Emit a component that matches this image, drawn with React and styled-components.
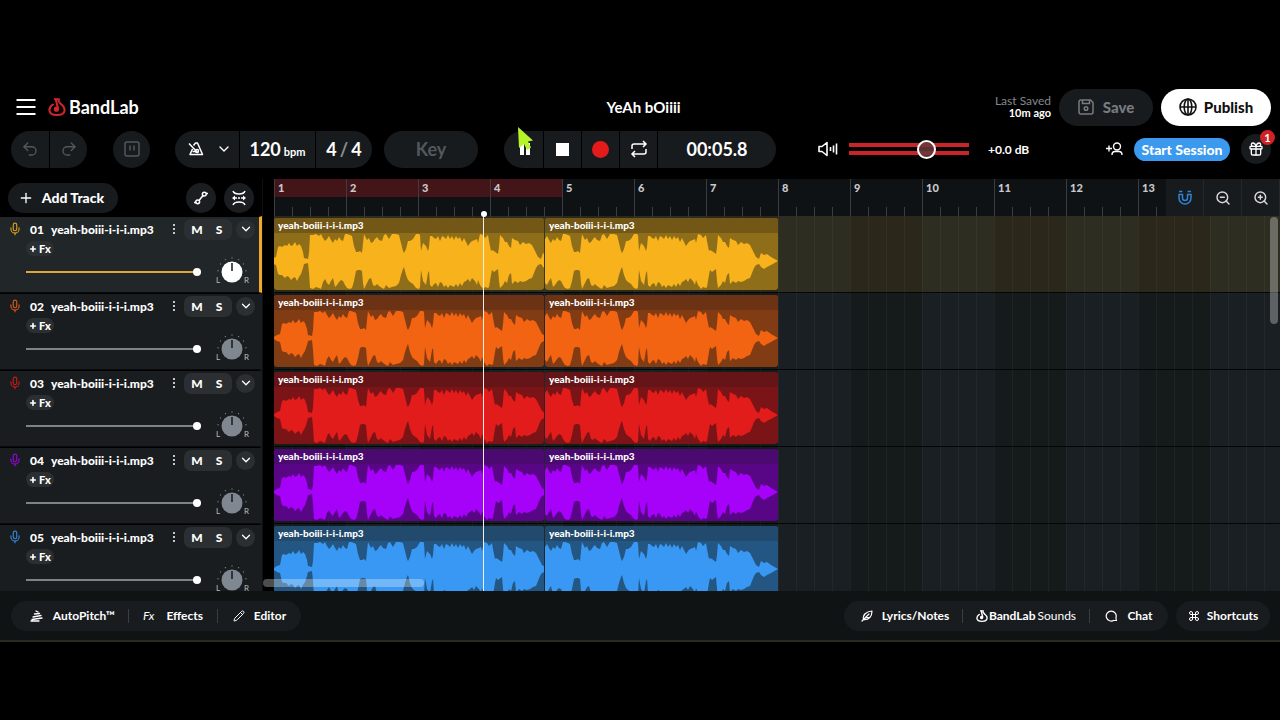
import React from "react";
import styled, { createGlobalStyle } from "styled-components";
import { ChevronDown, Command, Gift, Mic, Pencil, Plus, Redo2, Undo2, ZoomIn, ZoomOut } from "lucide-react";

const GlobalStyle = createGlobalStyle`
  * {
    box-sizing: border-box;
  }

  body {
    margin: 0;
    background: #000;
    color: #fff;
    font-family: Lato, "Open Sans", sans-serif;
  }

  button {
    display: flex;
    align-items: center;
    justify-content: center;
    padding: 0;
    border: 0;
    background: none;
    color: inherit;
    font: inherit;
    cursor: pointer;
  }

  svg {
    flex: none;
  }
`;

const Page = styled.div`
  display: flex;
  flex-direction: column;
  height: 100vh;
  padding: 85px 0 78px;
  overflow: hidden;
`;

/* top bar */

const Header = styled.header`
  display: grid;
  grid-template-columns: 1fr auto 1fr;
  align-items: center;
  height: 44px;
  padding: 0 9px 0 16px;
`;

const HeaderSide = styled.div`
  display: flex;
  align-items: center;
  justify-content: ${(props) => (props.$end ? "flex-end" : "flex-start")};
  gap: ${(props) => (props.$end ? "8px" : "12px")};
`;

const Logo = styled.a`
  display: flex;
  align-items: center;
  gap: 3px;
  color: #fff;
  font-size: 18px;
  font-weight: 700;
  line-height: 22px;
  text-decoration: none;
`;

const Title = styled.h1`
  margin: 0;
  font-size: 15px;
  font-weight: 700;
  line-height: 20px;
`;

const Saved = styled.div`
  display: flex;
  flex-direction: column;
  color: #84888c;
  font-size: 12px;
  line-height: 12px;
  text-align: right;

  strong {
    color: #fff;
    font-size: 11px;
  }
`;

const HeaderButton = styled.button`
  gap: ${(props) => (props.$primary ? "7px" : "9px")};
  width: ${(props) => (props.$primary ? "110px" : "94px")};
  height: 37px;
  border-radius: 19px;
  background: ${(props) => (props.$primary ? "#fff" : "#171b1e")};
  color: ${(props) => (props.$primary ? "#111" : "#777b80")};
  font-size: 15px;
  font-weight: 900;
`;

/* toolbar */

const Toolbar = styled.div`
  display: flex;
  align-items: center;
  height: 40px;
  padding: 0 9px 0 11px;
`;

const Group = styled.div`
  display: flex;
  gap: 1px;
  height: 37px;
  margin-right: ${(props) => props.$space || "12px"};
`;

const Tool = styled.button`
  position: relative;
  gap: ${(props) => props.$gap || "3px"};
  width: ${(props) => props.$width || "37px"};
  height: 37px;
  padding-left: ${(props) => props.$pad || "0"};
  background: #171b1e;
  color: ${(props) => (props.$dim ? "#53585c" : "#fff")};
  font-size: 18px;
  font-weight: 700;

  &:first-child {
    border-radius: 19px 0 0 19px;
  }

  &:last-child {
    border-radius: 0 19px 19px 0;
  }

  &:only-child {
    border-radius: 19px;
  }

  small {
    padding-top: 4px;
    font-size: 11px;
  }

  i {
    color: #8b8f92;
    font-style: normal;
  }
`;

const Pointer = styled.svg`
  position: absolute;
  top: -4px;
  left: 14px;
`;

const Volume = styled.label`
  display: flex;
  align-items: center;
  gap: 11px;
`;

const MasterSlider = styled.input`
  width: 120px;
  height: 20px;
  margin: 0;
  appearance: none;
  background: linear-gradient(#c9242a 0 4px, transparent 4px 8px, #c9242a 8px) center / 100% 12px no-repeat;

  &::-webkit-slider-thumb {
    width: 19px;
    height: 19px;
    appearance: none;
    border: 2px solid #fff;
    border-radius: 50%;
    background: #6a393bdd;
  }
`;

const Decibels = styled.output`
  margin-left: 19px;
  font-size: 12px;
  font-weight: 700;
`;

const SessionArea = styled.div`
  display: flex;
  align-items: center;
  gap: 11px;
  margin-left: auto;
`;

const SessionButton = styled.button`
  width: 96px;
  height: 23px;
  border-radius: 12px;
  background: #3b99ee;
  font-size: 14px;
  font-weight: 900;
`;

const GiftButton = styled.button`
  position: relative;
  width: 30px;
  height: 30px;
  border-radius: 50%;
  background: #171b1e;
`;

const Badge = styled.span`
  position: absolute;
  top: -4px;
  right: -4px;
  width: 15px;
  height: 15px;
  border-radius: 50%;
  background: #cf2228;
  font-size: 11px;
  font-weight: 700;
  line-height: 15px;
`;

/* workspace */

const Workspace = styled.main`
  display: grid;
  flex: 1;
  grid-template-rows: minmax(0, 1fr);
  grid-template-columns: 262px minmax(0, 1fr);
  min-height: 0;
  margin-top: 10px;
  overflow: hidden;
`;

const SidebarHead = styled.div`
  display: flex;
  align-items: center;
  gap: 8px;
  height: 37px;
  padding: 0 8px;
`;

const AddTrack = styled.button`
  gap: 8px;
  width: 110px;
  height: 30px;
  margin-right: auto;
  padding-right: 4px;
  border-radius: 15px;
  background: #171b1e;
  font-size: 14px;
  font-weight: 900;
`;

const RoundButton = styled.button`
  width: ${(props) => props.$size};
  height: ${(props) => props.$size};
  border-radius: 50%;
  background: ${(props) => props.$fill || "#1a1e21"};
`;

const TrackPanel = styled.section`
  display: flex;
  flex-direction: column;
  height: 77px;
  padding: 1px 4px 0 8px;
  border-top: 1px solid #000;
  border-bottom: 1px solid #090a0b;
  border-right: 3px solid ${(props) => (props.$selected ? "#f0a92b" : "#1a1d20")};
  background: ${(props) => (props.$selected ? "#212628" : "#1a1d20")};
`;

const TrackTop = styled.div`
  display: flex;
  align-items: center;
  height: 22px;
`;

const TrackNumber = styled.span`
  width: 21px;
  margin-left: 8px;
  font-size: 12px;
  font-weight: 900;
`;

const TrackName = styled.span`
  flex: 1;
  font-size: 12px;
  font-weight: 900;
  white-space: nowrap;
`;

const Dots = styled.button`
  width: 12px;
  height: 20px;
  margin-right: 4px;
`;

const MuteSolo = styled.div`
  display: flex;
  margin-right: 4px;
  padding: 0 2px;
  border-radius: 7px;
  background: #2b2f32;
`;

const Letter = styled.button`
  width: 22px;
  height: 21px;
  font-size: 12px;
  font-weight: 900;
`;

const FxButton = styled.button`
  gap: 2px;
  width: 28px;
  height: 15px;
  margin: 1px 0 0 18px;
  border-radius: 8px;
  background: #2b2f32;
  font-size: 11px;
  font-weight: 900;
`;

const TrackBottom = styled.div`
  display: flex;
  align-items: center;
  justify-content: space-between;
  height: 32px;
  padding: 0 5px 0 18px;
`;

const TrackSlider = styled.input`
  width: 175px;
  height: 10px;
  margin: 0;
  appearance: none;
  background: linear-gradient(${(props) => props.$color}, ${(props) => props.$color}) center / 100% 2px no-repeat;

  &::-webkit-slider-thumb {
    width: 8px;
    height: 8px;
    appearance: none;
    border-radius: 50%;
    background: #fff;
  }
`;

const Timeline = styled.div`
  position: relative;
  min-width: 0;
  padding-left: 11px;
  border-left: 1px solid #0e1011;
`;

const Ruler = styled.div`
  display: flex;
  height: 37px;
  background: #0f1214;
`;

const Bars = styled.div`
  display: flex;
  flex: 1;
  overflow: hidden;
`;

const Bar = styled.div`
  flex: none;
  width: 72px;
  padding: 2px 4px;
  background:
    linear-gradient(#3a3e40, #3a3e40) 0 0 / 1px 100% no-repeat,
    repeating-linear-gradient(90deg, #3a3e40 0 1px, transparent 1px 18px) 0 100% / 100% 9px no-repeat,
    linear-gradient(${(props) => (props.$loop ? "#431519" : "transparent")} 0 18px, transparent 18px);
  color: #c9c9cd;
  font-size: 11px;
  font-weight: 900;
  line-height: 14px;
`;

const RulerTool = styled.button`
  width: 38px;
  height: 37px;
  border-right: 1px solid #24282b;
  background: #171b1e;
  color: ${(props) => (props.$active ? "#2f83d0" : "#d8d8d8")};
`;

const Lane = styled.div`
  display: flex;
  gap: 1px;
  height: 77px;
  padding: 2px 0;
  border-bottom: 1px solid #050606;
  background:
    repeating-linear-gradient(90deg, #ffffff0a 0 1px, transparent 1px 18px),
    ${(props) =>
      props.$selected
        ? "repeating-linear-gradient(90deg, #2b271b 0 72px, #2e2d21 72px 144px)"
        : "repeating-linear-gradient(90deg, #151a1b 0 72px, #191f22 72px 144px)"};
`;

const Clip = styled.div`
  flex: none;
  width: ${(props) => props.$width}px;
  overflow: hidden;
  border-radius: 3px;
  background: ${(props) => props.$body};

  svg {
    display: block;
  }
`;

const ClipName = styled.div`
  height: 15px;
  padding-left: 4px;
  background: ${(props) => props.$head};
  font-size: 10px;
  font-weight: 900;
  line-height: 14px;
`;

const Playhead = styled.div`
  position: absolute;
  top: 34px;
  bottom: 0;
  left: 220px;
  width: 1px;
  background: #f3eee6;

  &::before {
    content: "";
    position: absolute;
    top: -2px;
    left: -2px;
    width: 6px;
    height: 6px;
    border-radius: 50%;
    background: #fff;
  }
`;

const ScrollX = styled.div`
  position: absolute;
  bottom: 4px;
  left: 0;
  width: 161px;
  height: 8px;
  border-radius: 4px;
  background: #ffffff4d;
`;

const ScrollY = styled.div`
  position: absolute;
  top: 38px;
  right: 2px;
  width: 8px;
  height: 107px;
  border-radius: 4px;
  background: #ffffff4d;
`;

/* bottom bar */

const Footer = styled.footer`
  display: flex;
  align-items: center;
  gap: 8px;
  height: 51px;
  padding: 0 10px 0 11px;
  border-bottom: 2px solid #2b291f;
  background: #0f1314;
`;

const Pill = styled.div`
  display: flex;
  align-items: center;
  height: 30px;
  margin-right: ${(props) => (props.$push ? "auto" : "0")};
  border-radius: 15px;
  background: #181c1f;
`;

const FooterButton = styled.button`
  gap: ${(props) => props.$gap || "12px"};
  width: ${(props) => props.$width};
  height: 14px;
  padding-left: ${(props) => props.$pad || "0"};
  border-left: 1px solid #3a3f42;
  font-size: 12px;
  font-weight: 700;

  &:first-child {
    border-left: 0;
  }

  em {
    font-weight: 400;
  }
`;

const SoundsName = styled.span`
  span {
    margin-left: 2px;
    font-weight: 400;
  }
`;

const tracks = [
  { color: "#f7b21c", body: "#8f6e19", head: "#735717", selected: true, shift: 4 },
  { color: "#f26312", body: "#823c14", head: "#6b3214", shift: 0 },
  { color: "#e21b1b", body: "#7b1417", head: "#651518", shift: 0 },
  { color: "#a602fa", body: "#590686", head: "#4b0a70", shift: 0 },
  { color: "#3998f3", body: "#235682", head: "#224a6d", shift: 0 },
];

// [x, height above the centre line, height below it]
const samples = [
  [0, 1, 1], [3, 3, 3], [6, 4, 4], [8, 14, 13], [10, 15, 14], [12, 14, 14], [15, 16, 17], [17, 15, 15],
  [19, 18, 16], [21, 15, 19], [23, 16, 17], [25, 19, 16], [27, 15, 20], [29, 17, 16], [31, 15, 13], [33, 9, 7],
  [34, 3, 3], [38, 2, 2], [39, 8, 12], [40, 26, 27], [43, 26, 28], [46, 27, 26], [49, 25, 27], [51, 27, 28],
  [53, 23, 21], [55, 20, 18], [57, 22, 22], [59, 25, 24], [61, 21, 20], [63, 18, 17], [65, 22, 26], [67, 20, 24],
  [69, 24, 21], [71, 21, 19], [73, 20, 20], [75, 27, 24], [77, 27, 27], [80, 26, 28], [82, 25, 27], [84, 15, 20],
  [86, 9, 10], [88, 9, 9], [90, 10, 9], [92, 8, 10], [93, 18, 22], [94, 27, 28], [97, 21, 22], [99, 23, 18],
  [101, 18, 17], [103, 19, 24], [105, 22, 25], [107, 24, 23], [109, 21, 25], [112, 20, 27], [114, 26, 28],
  [116, 27, 24], [119, 22, 27], [122, 27, 26], [126, 27, 25], [129, 26, 22], [131, 18, 14], [133, 10, 8],
  [134, 8, 6], [136, 12, 14], [138, 20, 19], [140, 20, 21], [143, 22, 23], [146, 27, 27], [149, 27, 28],
  [150, 26, 26], [151, 10, 9], [153, 18, 20], [156, 15, 24], [158, 10, 12], [159, 14, 10], [160, 25, 24],
  [162, 25, 26], [164, 23, 23], [166, 22, 22], [168, 25, 26], [170, 20, 21], [172, 25, 22], [174, 24, 26],
  [176, 22, 24], [178, 26, 27], [180, 22, 24], [182, 25, 25], [184, 21, 26], [186, 25, 23], [188, 22, 26],
  [190, 24, 22], [192, 19, 25], [194, 23, 21], [196, 19, 20], [198, 15, 18], [200, 18, 21], [202, 20, 17],
  [205, 21, 20], [207, 22, 24], [208, 18, 19], [210, 27, 24], [213, 26, 28], [215, 23, 26], [218, 26, 27],
  [219, 20, 26], [221, 10, 14], [222, 11, 9], [224, 10, 11], [228, 7, 8], [229, 14, 20], [230, 26, 27],
  [233, 23, 24], [235, 19, 20], [237, 19, 22], [239, 15, 14], [241, 13, 12], [242, 23, 23], [245, 21, 20],
  [248, 20, 22], [250, 16, 20], [253, 19, 21], [256, 17, 20], [259, 18, 18], [262, 16, 17], [264, 12, 12],
  [266, 8, 7], [268, 4, 4], [271, 2, 3], [273, 8, 6], [276, 6, 8], [279, 7, 6], [283, 4, 4], [290, 0, 0],
];

const Waveform = ({ color, start, width }) => {
  const top = samples.map(([x, up]) => `${x},${28 - up}`);
  const bottom = samples.map(([x, , down]) => `${x},${28 + down}`).reverse();
  return (
    <svg width={width} height="58" viewBox={`${start} 0 ${width} 58`}>
      <polygon points={[...top, ...bottom].join(" ")} fill={color} />
    </svg>
  );
};

const Flame = ({ color, size }) => (
  <svg width={size} height={size} viewBox="0 0 18 18" fill="none" stroke={color} strokeWidth="2" strokeLinecap="round" strokeLinejoin="round">
    <path d="M5 6.500C2.500 8 1.200 10.500 1.400 12.600C1.800 15.600 4.600 17 9 17S16.200 15.600 16.600 12.600C16.800 10.500 15 7.500 12.800 6" />
    <path d="M6.800 1.200H11L10.400 3L12.800 6" />
    <path d="M7.800 1.500L10 10.500" />
    <circle cx="8.400" cy="11.200" r="1.600" fill={color} />
  </svg>
);

const Knob = ({ active }) => (
  <svg width="36" height="32" viewBox="0 0 36 32">
    <g fill="#777d80">
      {[-85, -55, -28, 0, 28, 55, 85].map((angle) => (
        <circle key={angle} cx="18" cy="2" r="0.700" transform={`rotate(${angle} 18 16)`} />
      ))}
    </g>
    <circle cx="18" cy="16" r="10.500" fill={active ? "#fff" : "#7f8790"} />
    <path d="M18 7V15" stroke="#15181a" strokeWidth="1.500" />
    <text x="2" y="27" fill="#b9bcbe" fontSize="8">L</text>
    <text x="30" y="27" fill="#b9bcbe" fontSize="8">R</text>
  </svg>
);

const Track = ({ track, index }) => (
  <TrackPanel $selected={track.selected}>
    <TrackTop>
      <Mic size={14} color={track.color} strokeWidth={2} opacity="0.85" />
      <TrackNumber>0{index + 1}</TrackNumber>
      <TrackName>yeah-boiii-i-i-i.mp3</TrackName>
      <Dots aria-label="Track options">
        <svg width="4" height="12" fill="#fff">
          <circle cx="2" cy="2" r="1" />
          <circle cx="2" cy="6" r="1" />
          <circle cx="2" cy="10" r="1" />
        </svg>
      </Dots>
      <MuteSolo>
        <Letter aria-label="Mute">M</Letter>
        <Letter aria-label="Solo">S</Letter>
      </MuteSolo>
      <RoundButton $size="19px" $fill="#2b2f32" aria-label="Expand track">
        <ChevronDown size={14} strokeWidth={2.2} />
      </RoundButton>
    </TrackTop>
    <FxButton>
      <Plus size={8} strokeWidth={5} />
      Fx
    </FxButton>
    <TrackBottom>
      <TrackSlider
        type="range"
        aria-label="Track volume"
        defaultValue={100}
        $color={track.selected ? "#e3a43a" : "#7d8388"}
      />
      <Knob active={track.selected} />
    </TrackBottom>
  </TrackPanel>
);

const App = () => {
  return (
    <Page>
      <GlobalStyle />
      <Header>
        <HeaderSide>
          <button aria-label="Menu">
            <svg width="20" height="18" viewBox="0 0 20 18" stroke="#fff" strokeWidth="2">
              <path d="M0.500 2H19.500M0.500 9H19.500M0.500 16H19.500" />
            </svg>
          </button>
          <Logo href="#">
            <Flame color="#d3262b" size={18} />
            BandLab
          </Logo>
        </HeaderSide>
        <Title>YeAh bOiiii</Title>
        <HeaderSide $end>
          <Saved>
            <span>Last Saved</span>
            <strong>10m ago</strong>
          </Saved>
          <HeaderButton>
            <svg width="16" height="16" viewBox="0 0 16 16" fill="none" stroke="currentColor" strokeWidth="1.500">
              <path d="M3 1H12.500L15 3.500V13Q15 15 13 15H3Q1 15 1 13V3Q1 1 3 1Z" />
              <path d="M4.500 1V4.500H11.500V1" />
              <circle cx="8" cy="9.500" r="1.800" />
            </svg>
            Save
          </HeaderButton>
          <HeaderButton $primary>
            <svg width="18" height="18" viewBox="0 0 18 18" fill="none" stroke="currentColor" strokeWidth="1.600">
              <circle cx="9" cy="9" r="8" />
              <ellipse cx="9" cy="9" rx="3.800" ry="8" />
              <path d="M9 1V17M1 9H17" />
            </svg>
            Publish
          </HeaderButton>
        </HeaderSide>
      </Header>

      <Toolbar>
        <Group $space="26px">
          <Tool $dim $width="38px" aria-label="Undo"><Undo2 size={18} strokeWidth={1.8} /></Tool>
          <Tool $dim aria-label="Redo"><Redo2 size={18} strokeWidth={1.8} /></Tool>
        </Group>
        <Group $space="25px">
          <Tool $dim aria-label="Sampler">
            <svg width="16" height="16" viewBox="0 0 16 16" fill="none" stroke="currentColor" strokeWidth="1.500">
              <rect x="1" y="1" width="14" height="14" rx="2" />
              <path d="M6 4.500V9.500M10 4.500V9.500" />
            </svg>
          </Tool>
        </Group>
        <Group>
          <Tool $width="64px" $gap="12px" $pad="6px" aria-label="Metronome">
            <svg width="16" height="16" viewBox="0 0 16 16" fill="none" stroke="currentColor" strokeWidth="1.500" strokeLinejoin="round">
              <path d="M5.500 4.500L7.500 2H9.500L14.500 13.500H2L4.500 8" />
              <path d="M1 2.500L10 12M4.500 10.500H8" />
              <circle cx="9" cy="10" r="1.500" />
            </svg>
            <ChevronDown size={16} />
          </Tool>
          <Tool $width="75px">120 <small>bpm</small></Tool>
          <Tool $width="56px">4 <i>/</i> 4</Tool>
        </Group>
        <Group $space="26px">
          <Tool $dim $width="94px">Key</Tool>
        </Group>
        <Group $space="42px">
          <Tool $width="39px" $pad="2px" aria-label="Pause">
            <svg width="12" height="14" viewBox="0 0 12 14" fill="#fff">
              <path d="M1 1H5V13H1ZM7 1H11V13H7Z" />
            </svg>
            <Pointer width="16" height="26" viewBox="0 0 16 26">
              <path d="M0 0L15 13.500L10 14.500L13 20.500L9 23L6 17L1 21Z" fill="#b6f42a" />
            </Pointer>
          </Tool>
          <Tool aria-label="Stop">
            <svg width="13" height="13"><rect width="13" height="13" fill="#fff" /></svg>
          </Tool>
          <Tool aria-label="Record">
            <svg width="17" height="17"><circle cx="8.500" cy="8.500" r="8.500" fill="#e31b1b" /></svg>
          </Tool>
          <Tool aria-label="Loop">
            <svg width="18" height="18" viewBox="0 0 18 18" fill="none" stroke="#fff" strokeWidth="1.500">
              <path d="M2 9V6Q2 4 4 4H15.500M13 1L16 4L13 7" />
              <path d="M16 9V12Q16 14 14 14H2.500M5 11L2 14L5 17" />
            </svg>
          </Tool>
          <Tool $width="118px">00:05.8</Tool>
        </Group>
        <Volume>
          <svg width="20" height="16" viewBox="0 0 20 16" fill="none" stroke="#fff" strokeWidth="1.600" strokeLinejoin="round">
            <path d="M1 5.500H4L9 1.500V14.500L4 10.500H1Z" />
            <path d="M12.500 6V10M15.500 4.500V11.500M18.500 2.500V13.500" />
          </svg>
          <MasterSlider type="range" aria-label="Master volume" defaultValue={67} />
        </Volume>
        <Decibels>+0.0 dB</Decibels>
        <SessionArea>
          <button aria-label="Invite people">
            <svg width="17" height="14" viewBox="0 0 17 14" fill="none" stroke="#fff" strokeWidth="1.400">
              <path d="M0 6.500H6M3 3.500V9.500" />
              <circle cx="11" cy="4.500" r="3.500" />
              <path d="M6 13Q6 9.500 9 9.500H13Q16 9.500 16 13" />
            </svg>
          </button>
          <SessionButton>Start Session</SessionButton>
          <GiftButton aria-label="Gifts">
            <Gift size={16} strokeWidth={2} />
            <Badge>1</Badge>
          </GiftButton>
        </SessionArea>
      </Toolbar>

      <Workspace>
        <div>
          <SidebarHead>
            <AddTrack>
              <Plus size={16} strokeWidth={2} />
              Add Track
            </AddTrack>
            <RoundButton $size="30px" aria-label="Automation">
              <svg width="14" height="14" viewBox="0 0 14 14" fill="none" stroke="#fff" strokeWidth="1.500">
                <path d="M0 11.500H2M5 9.500L9 4.500M12 2.500H14" />
                <circle cx="3.700" cy="10.800" r="1.900" />
                <circle cx="10.300" cy="3.200" r="1.900" />
              </svg>
            </RoundButton>
            <RoundButton $size="30px" aria-label="Fit tracks">
              <svg width="16" height="16" viewBox="0 0 16 16" fill="none" stroke="#fff" strokeWidth="1.500">
                <path d="M2 1Q3 4 8 4T14 1M2 15Q3 12 8 12T14 15M3 8H6M7 8H9M10 8H13" />
                <path d="M4 5.500L1 8L4 10.500ZM12 5.500L15 8L12 10.500Z" fill="#fff" stroke="none" />
              </svg>
            </RoundButton>
          </SidebarHead>
          {tracks.map((track, index) => (
            <Track key={track.color} track={track} index={index} />
          ))}
        </div>

        <Timeline>
          <Ruler>
            <Bars>
              {Array.from({ length: 13 }, (_, index) => (
                <Bar key={index} $loop={index < 4}>{index + 1}</Bar>
              ))}
            </Bars>
            <RulerTool $active aria-label="Snap to grid">
              <svg width="14" height="15" viewBox="0 0 14 15" fill="none" stroke="currentColor" strokeWidth="1.500">
                <path d="M1 4.500V8A6 6 0 0 0 13 8V4.500H9.500V8A2.500 2.500 0 0 1 4.500 8V4.500Z" />
                <path d="M1 1.500H4.500M9.500 1.500H13" />
              </svg>
            </RulerTool>
            <RulerTool aria-label="Zoom out"><ZoomOut size={16} strokeWidth={2.2} /></RulerTool>
            <RulerTool aria-label="Zoom in"><ZoomIn size={16} strokeWidth={2.2} /></RulerTool>
          </Ruler>
          {tracks.map((track) => (
            <Lane key={track.color} $selected={track.selected}>
              <Clip $width={270} $body={track.body}>
                <ClipName $head={track.head}>yeah-boiii-i-i-i.mp3</ClipName>
                <Waveform color={track.color} start={track.shift} width={270} />
              </Clip>
              <Clip $width={233} $body={track.body}>
                <ClipName $head={track.head}>yeah-boiii-i-i-i.mp3</ClipName>
                <Waveform color={track.color} start={57} width={233} />
              </Clip>
            </Lane>
          ))}
          <Playhead />
          <ScrollX />
          <ScrollY />
        </Timeline>
      </Workspace>

      <Footer>
        <Pill $push>
          <FooterButton $width="117px" $gap="10px" $pad="6px">
            <svg width="13" height="12" viewBox="0 0 13 12" fill="none" stroke="#fff" strokeWidth="1.300" strokeLinecap="round">
              <path d="M6 1L8 2M4.500 4L9.500 3.500M3 7L11 5.500M2 9.500L12 8M1 11H9" />
            </svg>
            AutoPitch™
          </FooterButton>
          <FooterButton $width="89px"><em>Fx</em> Effects</FooterButton>
          <FooterButton $width="84px" $gap="9px"><Pencil size={12} /> Editor</FooterButton>
        </Pill>
        <Pill>
          <FooterButton $width="118px" $gap="9px" $pad="4px">
            <svg width="12" height="12" viewBox="0 0 12 12" fill="none" stroke="#fff" strokeWidth="1.200" strokeLinecap="round" strokeLinejoin="round">
              <path d="M1 11L8 4M2.500 9.500C1.500 5 5 1.500 11 1C11 6.500 8 10 2.500 9.500ZM5 7.500H8" />
            </svg>
            Lyrics/Notes
          </FooterButton>
          <FooterButton $width="127px" $gap="1px">
            <Flame color="#fff" size={12} />
            <SoundsName>BandLab<span>Sounds</span></SoundsName>
          </FooterButton>
          <FooterButton $width="79px" $gap="9px">
            <svg width="13" height="13" viewBox="0 0 13 13" fill="none" stroke="#fff" strokeWidth="1.200">
              <path d="M9 11.200A5 5 0 1 1 11 8.500Q11 11.500 12 11.500H9" />
            </svg>
            Chat
          </FooterButton>
        </Pill>
        <Pill>
          <FooterButton $width="94px" $gap="7px"><Command size={12} /> Shortcuts</FooterButton>
        </Pill>
      </Footer>
    </Page>
  );
};

export default App;
